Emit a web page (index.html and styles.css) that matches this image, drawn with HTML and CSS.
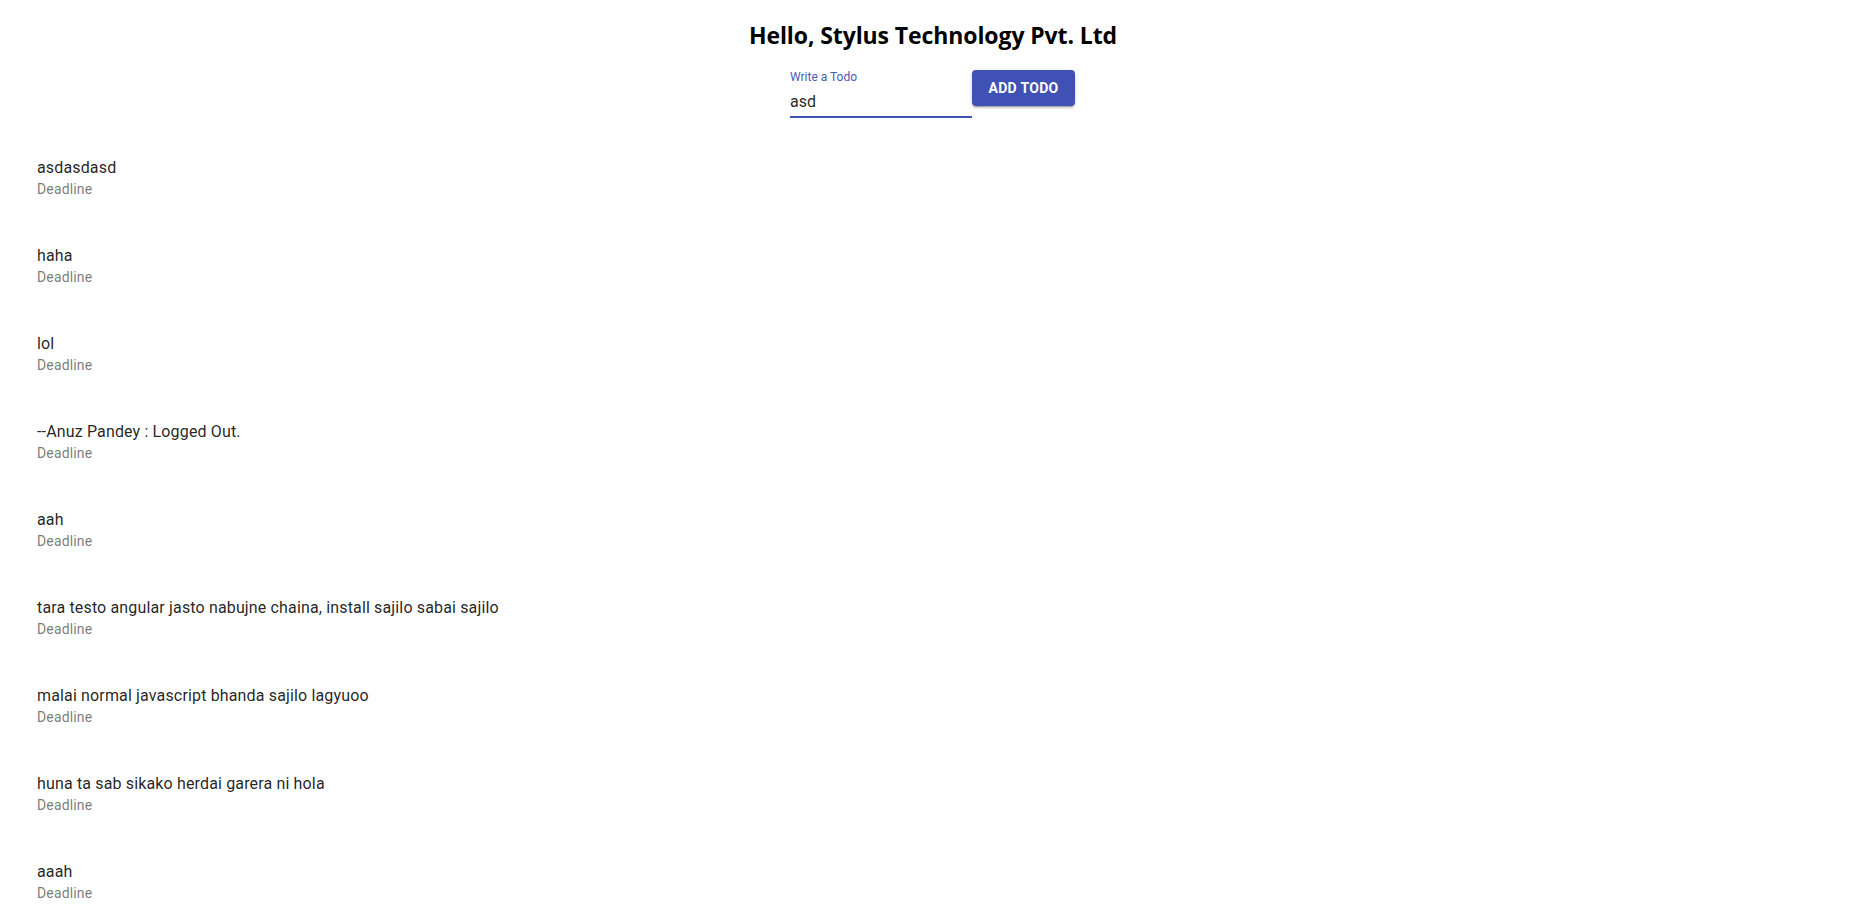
FILE: index.html
```html
<!DOCTYPE html>
<html>
<head>
<meta charset="utf-8">
<link rel="stylesheet" href="styles.css">
</head>
<body>
<div class="app">
  <header class="header">
    <h2 class="title">Hello, Stylus Technology Pvt. Ltd</h2>
    <form class="todo-form">
      <div class="field">
        <label class="field-label">Write a Todo</label>
        <div class="field-input">asd</div>
      </div>
      <button type="button" class="add-btn">Add Todo</button>
    </form>
  </header>
  <ul class="todo-list">
    <li class="todo-item"><div class="primary">asdasdasd</div><div class="secondary">Deadline</div></li>
    <li class="todo-item"><div class="primary">haha</div><div class="secondary">Deadline</div></li>
    <li class="todo-item"><div class="primary">lol</div><div class="secondary">Deadline</div></li>
    <li class="todo-item"><div class="primary">--Anuz Pandey : Logged Out.</div><div class="secondary">Deadline</div></li>
    <li class="todo-item"><div class="primary">aah</div><div class="secondary">Deadline</div></li>
    <li class="todo-item"><div class="primary">tara testo angular jasto nabujne chaina, install sajilo sabai sajilo</div><div class="secondary">Deadline</div></li>
    <li class="todo-item"><div class="primary">malai normal javascript bhanda sajilo lagyuoo</div><div class="secondary">Deadline</div></li>
    <li class="todo-item"><div class="primary">huna ta sab sikako herdai garera ni hola</div><div class="secondary">Deadline</div></li>
    <li class="todo-item"><div class="primary">aaah</div><div class="secondary">Deadline</div></li>
  </ul>
</div>
</body>
</html>
```

FILE: styles.css
```css
html {
  overflow: hidden;
}
body {
  margin: 0;
  background: #ffffff;
  font-family: Roboto, "Liberation Sans", Arial, sans-serif;
  color: rgba(0, 0, 0, 0.87);
}
.header {
  display: flex;
  flex-direction: column;
  align-items: center;
}
.title {
  margin: 21px 0 0 0;
  padding-right: 5px;
  font-family: "Open Sans", "Noto Sans", sans-serif;
  font-weight: 700;
  font-size: 23px;
  line-height: 28px;
  letter-spacing: -0.1px;
  color: #000;
}
.todo-form {
  display: flex;
  align-items: flex-start;
  margin-top: 21px;
  padding-right: 6px;
}
.field {
  width: 182px;
  display: flex;
  flex-direction: column;
}
.field-label {
  font-size: 12px;
  line-height: 12px;
  height: 16px;
  padding-top: 1px;
  box-sizing: border-box;
  color: #4a5ab5;
}
.field-input {
  font-size: 16px;
  line-height: 19px;
  padding: 6px 0 5px 0;
  border-bottom: 2px solid #3f51b5;
  color: rgba(0, 0, 0, 0.87);
}
.add-btn {
  width: 103px;
  height: 36px;
  border: none;
  border-radius: 4px;
  background: #3f51b5;
  color: #fff;
  font-family: Roboto, sans-serif;
  font-weight: 700;
  font-size: 14px;
  letter-spacing: 0.3px;
  text-transform: uppercase;
  padding: 6px 12px;
  box-shadow: 0px 3px 1px -2px rgba(0,0,0,0.2), 0px 2px 2px 0px rgba(0,0,0,0.14), 0px 1px 5px 0px rgba(0,0,0,0.12);
}
.todo-list {
  list-style: none;
  margin: 16px 0 0 0;
  padding: 0;
}
.todo-item {
  padding: 22px 37px;
  display: flex;
  flex-direction: column;
}
.primary {
  font-size: 16px;
  line-height: 24px;
  color: rgba(0, 0, 0, 0.87);
  letter-spacing: 0.15px;
}
.secondary {
  font-size: 14px;
  line-height: 18px;
  padding-bottom: 2px;
  color: rgba(0, 0, 0, 0.54);
  letter-spacing: 0.15px;
}
```
